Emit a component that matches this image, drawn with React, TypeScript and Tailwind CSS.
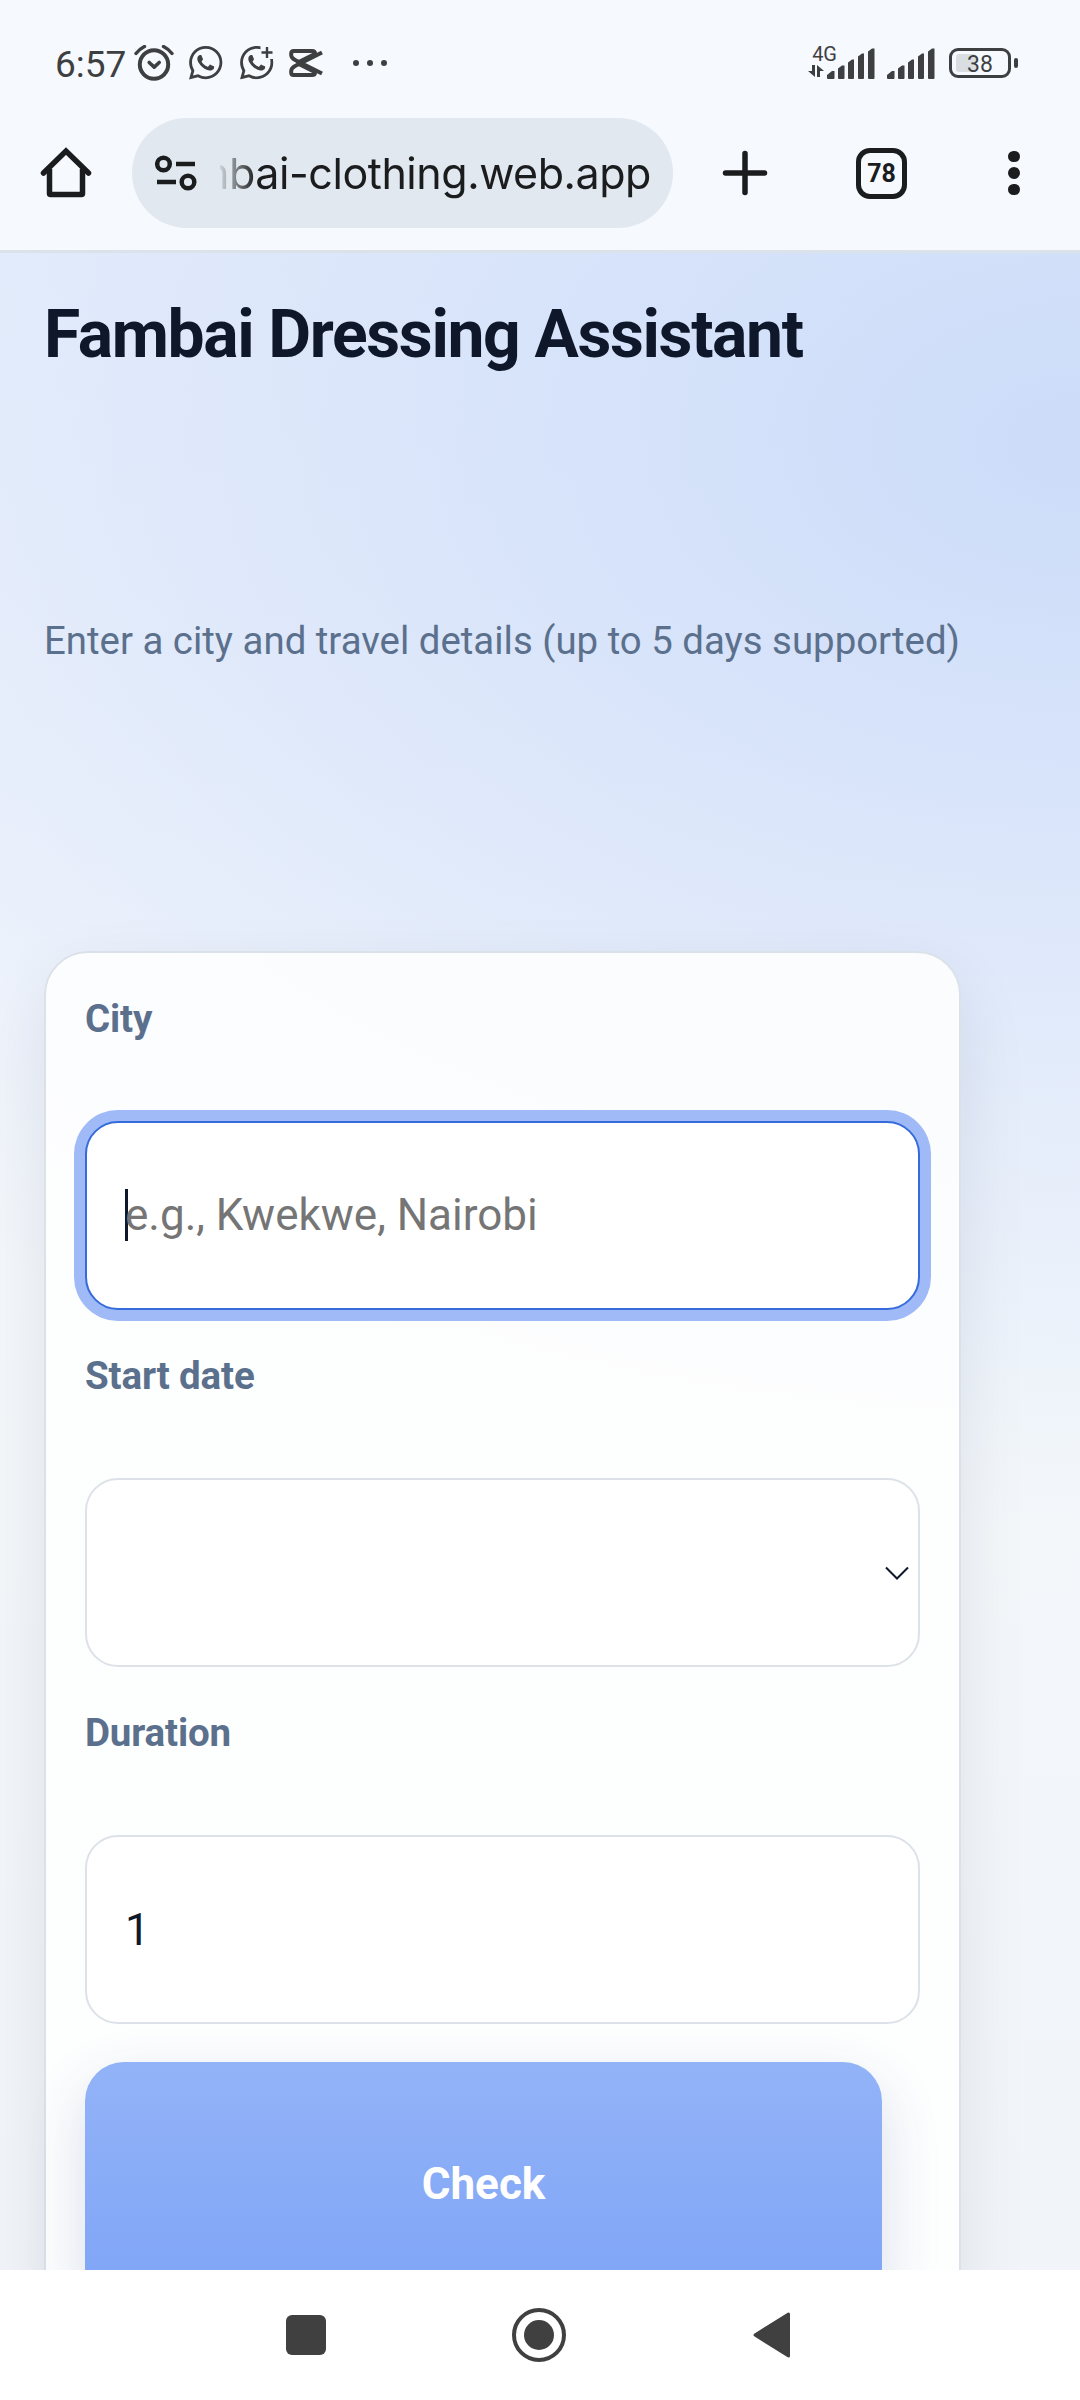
import { BsWhatsapp } from "react-icons/bs";

const AlarmIcon = () => (
  <svg width="40" height="36" viewBox="0 0 40 36" fill="none" stroke="#3e3f41">
    <circle cx="20" cy="19.5" r="14.2" strokeWidth="4" />
    <path d="M15.2 17.5l5 4.6 5-4.6" strokeWidth="3.6" strokeLinecap="round" strokeLinejoin="round" />
    <path d="M2 8.5q3.500-4.500 8.500-7M38 8.500q-3.500-4.500-8.500-7" strokeWidth="3.400" strokeLinecap="round" />
  </svg>
);

const WhatsappPlusIcon = () => (
  <svg width="34" height="34" viewBox="0 0 34 34">
    <BsWhatsapp x="0" y="0" size={33.500} color="#3e3f41" />
    <path d="M20.500 -1h15v14h-7l-3-2-5-5z" fill="#f6f9fe" />
    <path d="M27 1v11M21.500 6.500h11" stroke="#3e3f41" strokeWidth="2.400" />
  </svg>
);

const CapcutIcon = () => (
  <svg width="34" height="28" viewBox="0 0 34 28" fill="none" stroke="#3e3f41">
    <path
      d="M33 3.500L7 16.500Q2.200 19 2.200 22v1.500q0 2.500 2.500 2.500H23q3 0 3-2.500V22M33 24.500L7 11.500Q2.200 9 2.200 6V4.500Q2.200 2 4.700 2H23q3 0 3 2.500V6"
      strokeWidth="4"
    />
    <path d="M27 5L8 14.500M27 23L8 13.500" strokeWidth="5" />
  </svg>
);

const Signal = () => (
  <svg width="48" height="31" viewBox="0 0 48 31" fill="#3e3f41">
    <path d="M0 27l5-4H7.500V30q0 1-1 1H1q-1 0-1-1zM11 20.500l4-3h2.500V30q0 1-1 1H12q-1 0-1-1zM21 14.500l4-3h2V30q0 1-1 1h-4q-1 0-1-1zM31 8.500l4-3h2V30q0 1-1 1h-4q-1 0-1-1zM41 3.500L45 .5h2.500V30q0 1-1 1H42q-1 0-1-1z" />
  </svg>
);

const StatusBar = () => (
  <div className="flex h-[118px] items-center pt-2 pl-[55px] pr-[62px] text-[#3e3f41]">
    <span className="w-[79px] pt-0.5 text-[37px] font-[450] leading-none">6:57</span>
    <AlarmIcon />
    <BsWhatsapp className="ml-[15px]" size={33.500} />
    <div className="ml-[17px]">
      <WhatsappPlusIcon />
    </div>
    <div className="ml-[15px]">
      <CapcutIcon />
    </div>
    <div className="ml-[30px] flex gap-2">
      <i className="size-1.5 rounded-full bg-[#3e3f41]" />
      <i className="size-1.5 rounded-full bg-[#3e3f41]" />
      <i className="size-1.5 rounded-full bg-[#3e3f41]" />
    </div>
    <div className="ml-auto flex items-center">
      <div className="-mr-[10px] flex h-[34px] flex-col">
        <span className="pl-1 text-[20px] leading-[16px]">4G</span>
        <svg className="mt-[3px]" width="17" height="12" viewBox="0 0 17 12" fill="#3e3f41">
          <path d="M4 0h3v12L0 6h4zM9 12V0l7 6h-4v6z" />
        </svg>
      </div>
      <Signal />
      <div className="ml-3">
        <Signal />
      </div>
      <div className="ml-[14px] flex h-[30px] w-[62px] items-center rounded-[9px] border-3 border-[#3e3f41] pl-1">
        <i className="h-[18px] w-5 rounded-[3px] bg-[#d9dee3]" />
        <span className="-ml-[9px] pt-0.5 text-[23px] leading-none">38</span>
      </div>
      <i className="ml-[3px] h-[10px] w-1 rounded-full bg-[#3e3f41]" />
    </div>
  </div>
);

const Toolbar = () => (
  <div className="flex h-[110px] items-center pl-[40px]">
    <svg width="52" height="52" viewBox="0 0 52 52" fill="none" stroke="#1b1c1e" strokeWidth="5.5">
      <path d="M3.500 26L26 4l22.500 22" strokeLinecap="round" />
      <path d="M9.500 22v24.500q0 1 1 1h31q1 0 1-1V22" />
    </svg>
    <div className="ml-[40px] flex h-[110px] w-[541px] items-center rounded-full bg-[#e2e8f0] pl-[23px] pr-[22px]">
      <svg width="42" height="36" viewBox="0 0 42 36" fill="none" stroke="#1b1c1e" strokeWidth="4.5">
        <circle cx="8.500" cy="9" r="6.300" />
        <circle cx="33" cy="27" r="6.300" />
        <path d="M21 9h19M2 27h19" />
      </svg>
      <div className="ml-[23px] flex min-w-0 flex-1 justify-end overflow-hidden [mask-image:linear-gradient(to_right,rgba(0,0,0,0.1),black_36px)]">
        <span className="whitespace-nowrap font-[Inter] text-[43px] leading-[60px] tracking-[-0.450px] text-[#1b1c1e]">
          fambai-clothing.web.app
        </span>
      </div>
    </div>
    <svg className="ml-[49px]" width="46" height="46" viewBox="0 0 46 46" stroke="#1b1c1e" strokeWidth="5.5" strokeLinecap="round">
      <path d="M23 3.500v39M3.500 23h39" />
    </svg>
    <div className="ml-[88px] grid size-[51px] place-items-center rounded-[14px] border-[5.5px] border-[#1b1c1e] text-[25px] font-bold leading-none text-[#1b1c1e]">
      78
    </div>
    <div className="ml-[101px] flex flex-col gap-[5px]">
      <i className="size-[11.500px] rounded-full bg-[#1b1c1e]" />
      <i className="size-[11.500px] rounded-full bg-[#1b1c1e]" />
      <i className="size-[11.500px] rounded-full bg-[#1b1c1e]" />
    </div>
  </div>
);

const Field = ({ label, children }: { label: string; children: React.ReactNode }) => (
  <div className="mb-[39px]">
    <label className="mb-[76px] block h-[53px] text-[38.500px] font-bold leading-[53px] tracking-[-0.150px] text-[#5b708c]">
      {label}
    </label>
    {children}
  </div>
);

const boxClass =
  "flex h-[189px] w-[835px] items-center rounded-[33px] border-2 border-[#dde2e8] bg-white pl-[38px] text-[44px] text-[#0f172a]";

const NavBar = () => (
  <div className="flex h-[130px] items-center bg-white pl-[286px]">
    <i className="size-10 rounded-md bg-[#404040]" />
    <div className="ml-[186px] grid size-[54px] place-items-center rounded-full border-4 border-[#404040]">
      <i className="size-[30px] rounded-full bg-[#404040]" />
    </div>
    <svg className="ml-[186px]" width="40" height="46" viewBox="0 0 40 46">
      <path d="M36.500 2v42L3 23z" fill="#404040" stroke="#404040" strokeWidth="3" strokeLinejoin="round" />
    </svg>
  </div>
);

export default function App() {
  return (
    <div className="flex h-[2400px] w-[1080px] flex-col overflow-hidden font-[Roboto,sans-serif]">
      <header className="h-[253px] shrink-0 border-b-3 border-[#dce2ea] bg-[#f6f9fe]">
        <StatusBar />
        <Toolbar />
      </header>
      <main className="min-h-0 flex-1 overflow-hidden bg-[radial-gradient(1650px_1080px_at_1080px_190px,#ccdcf9,rgba(204,220,249,0)),linear-gradient(to_bottom,#edf2fc,#f4f7fc_750px,#f3f7fa_1200px,#f1f5f9)] pl-[44px]">
        <h1 className="pt-[40px] text-[66px] font-bold leading-[84px] tracking-[-1.370px] text-[#0f172a]">
          Fambai Dressing Assistant
        </h1>
        <p className="mt-[237px] text-[38.400px] leading-[54px] text-[#5b708c]">
          Enter a city and travel details (up to 5 days supported)
        </p>
        <section className="mt-[283px] h-[1500px] w-[917px] rounded-[44px] border-2 border-[#dbe1e8] bg-white/85 pt-[39px] pl-[39px] shadow-[0_28px_70px_rgba(15,23,42,0.085)]">
          <Field label="City">
            <div className="flex h-[189px] w-[835px] items-center rounded-[33px] border-2 border-[#356bda] bg-white pl-[38px] pb-0.5 text-[44px] text-[#757575] shadow-[0_0_0_11px_#9fbaf7]">
              <i className="-mr-[3px] h-[52px] w-[3px] bg-[#0f172a]" />
              e.g., Kwekwe, Nairobi
            </div>
          </Field>
          <Field label="Start date">
            <div className={boxClass}>
              <svg className="ml-auto mr-[9px]" width="24" height="14" viewBox="0 0 24 14" fill="none" stroke="#0f172a" strokeWidth="2">
                <path d="M1 1.500l11 11 11-11" />
              </svg>
            </div>
          </Field>
          <Field label="Duration">
            <div className={boxClass}>1</div>
          </Field>
          <button className="-mt-px h-[244px] w-[797px] rounded-[39px] bg-linear-to-b from-[#93b3f8] to-[#7ea4f6] text-[44px] font-bold text-white shadow-[0_22px_60px_rgba(30,58,138,0.16)]">
            Check
          </button>
        </section>
      </main>
      <NavBar />
    </div>
  );
}
